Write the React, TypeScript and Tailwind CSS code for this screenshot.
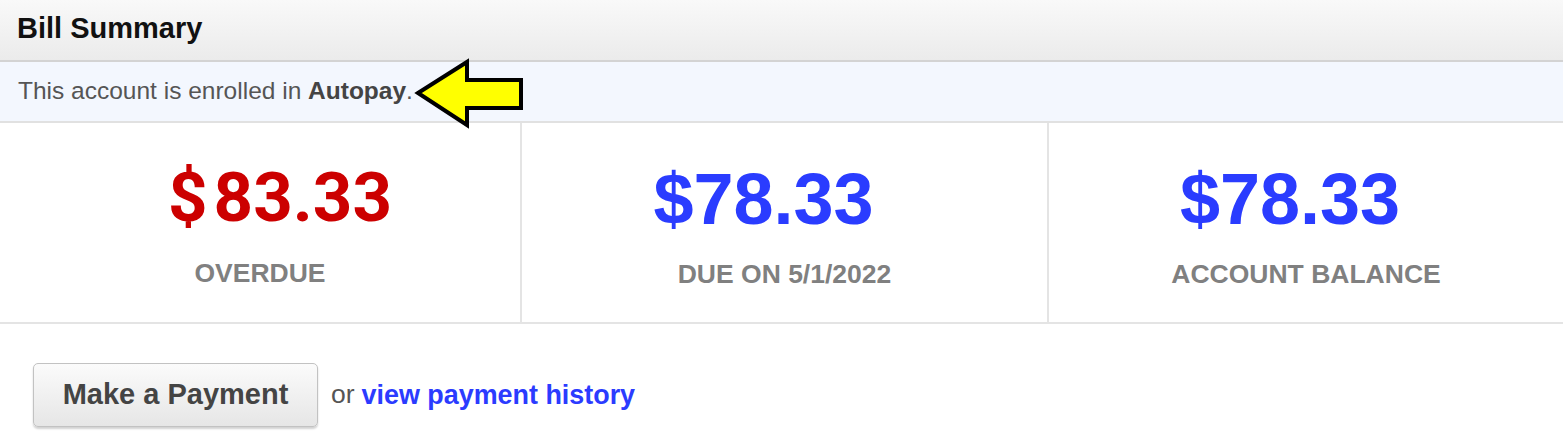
import React from "react";

export default function App() {
  return (
    <div className="relative w-[1563px] h-[442px] bg-white overflow-hidden font-['Liberation_Sans',Arial,sans-serif]">
      <div className="h-[62px] bg-gradient-to-b from-[#f9f9f9] to-[#ebebeb] border-b-2 border-[#d3d3d3] flex items-center pl-[17px] pb-[4px]">
        <span className="text-[29px] font-bold text-[#111] leading-none">Bill Summary</span>
      </div>
      <div className="h-[61px] bg-[#f3f7fe] border-b-2 border-[#e1e1e1] flex items-center pl-[18px]">
        <span className="text-[24.5px] text-[#555] leading-none">
          This account is enrolled in <b className="font-bold text-[#444]">Autopay</b>.
        </span>
      </div>
      <div className="grid grid-cols-[522px_527px_1fr] h-[201px] border-b-2 border-[#e4e4e4]">
        <div className="border-r-2 border-[#e4e4e4] flex flex-col items-center pt-[40px]">
          <div className="pl-[40px] text-[69px] leading-none font-bold text-[#cc0000] font-['Roboto',Arial,sans-serif]">
            $<span className="ml-[6px]">83.33</span>
          </div>
          <div className="mt-[28px] text-[26.5px] leading-none font-bold text-[#808080]">OVERDUE</div>
        </div>
        <div className="border-r-2 border-[#e4e4e4] flex flex-col items-center pt-[40px]">
          <div className="pr-[42px] text-[72px] leading-none font-bold text-[#2a3cff]">$78.33</div>
          <div className="mt-[26px] text-[26.5px] leading-none font-bold text-[#808080]">DUE ON 5/1/2022</div>
        </div>
        <div className="flex flex-col items-center pt-[40px]">
          <div className="pr-[32px] text-[72px] leading-none font-bold text-[#2a3cff]">$78.33</div>
          <div className="mt-[26px] text-[26.5px] leading-none font-bold text-[#808080]">ACCOUNT BALANCE</div>
        </div>
      </div>
      <div className="flex items-center pl-[33px] pt-[39px]">
        <button className="h-[64px] w-[285px] rounded-[5px] border border-[#c2c2c2] bg-gradient-to-b from-[#fbfbfb] to-[#e6e6e6] shadow-[0_2px_2px_rgba(0,0,0,0.18)] text-[29px] font-bold text-[#444] font-['Liberation_Sans',Arial,sans-serif]">
          Make a Payment
        </button>
        <span className="ml-[13px] text-[26.5px] text-[#555]">or</span>
        <span className="ml-[7px] text-[26.9px] font-bold text-[#2b3bff]">view payment history</span>
      </div>
      <svg className="absolute left-[410px] top-[56px]" width="120" height="76" viewBox="410 56 120 76">
        <polygon
          points="418,93 467,62 467,80 521,80 521,108 467,108 467,125"
          fill="#ffff00"
          stroke="#000"
          strokeWidth="4"
          strokeLinejoin="miter"
        />
      </svg>
    </div>
  );
}
